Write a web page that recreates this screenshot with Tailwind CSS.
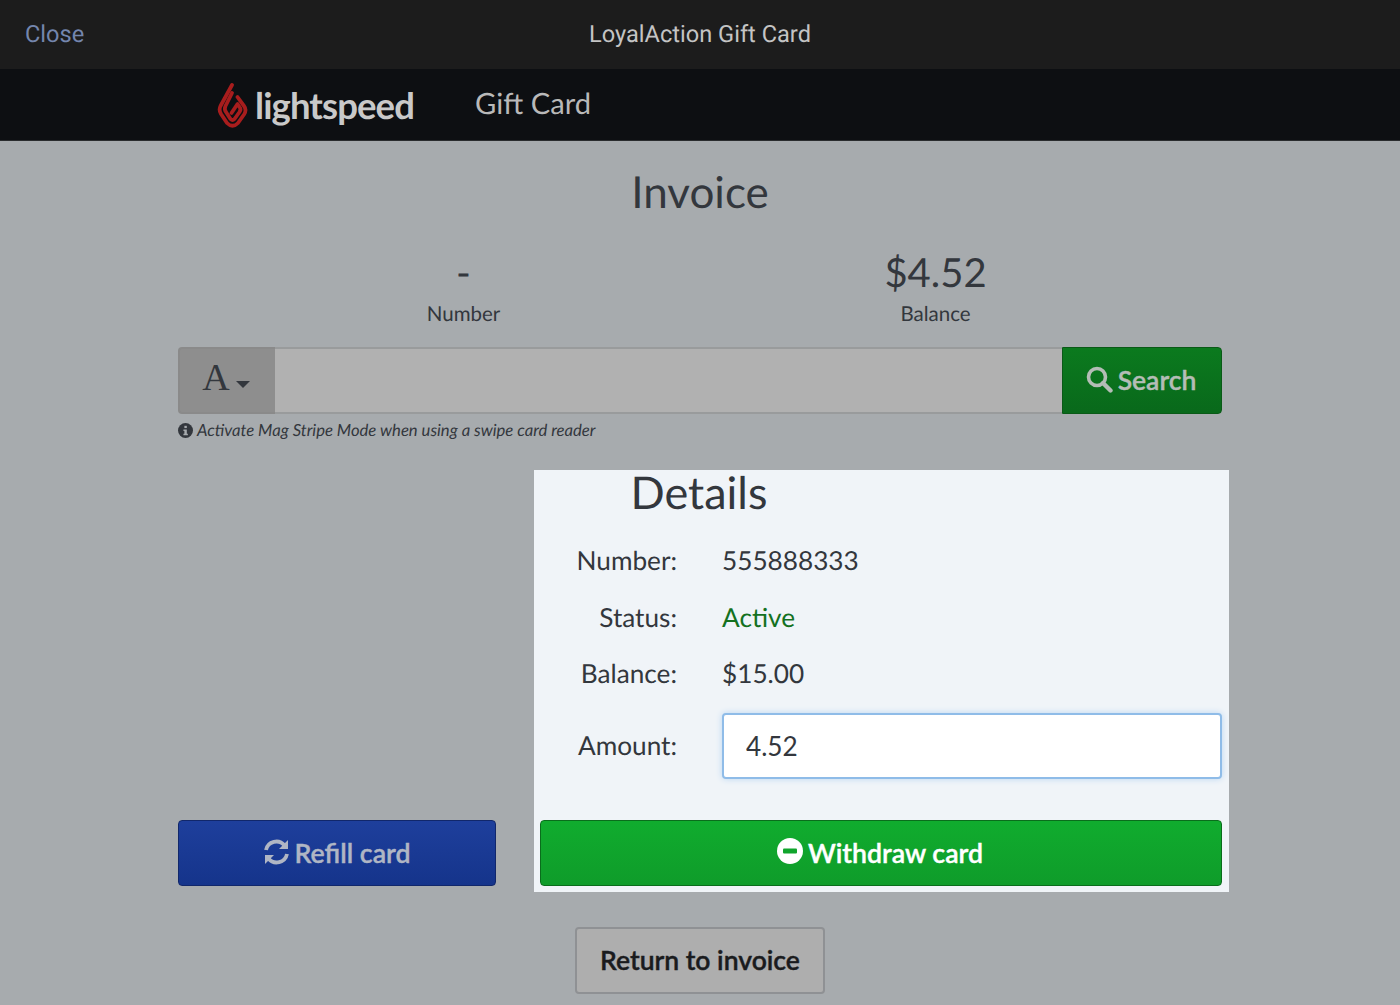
<!DOCTYPE html>
<html><head><meta charset="utf-8"><script src="https://cdn.jsdelivr.net/npm/@tailwindcss/browser@4"></script></head>
<body class="m-0 h-[1005px] w-[1400px] overflow-hidden bg-[#a7abae] font-['Lato',sans-serif] text-[#33373d] [text-rendering:geometricPrecision]">
<header class="relative flex h-[69px] items-center justify-center bg-[#1c1c1c] font-['Roboto',sans-serif] text-[23.600px] text-[#c4c4c4]">
  <span class="absolute left-[25px] text-[#7486ad]">Close</span>
  <span>LoyalAction Gift Card</span>
</header>
<nav class="flex h-[72px] items-center border-b border-[#2a2c2e] bg-[#0d0f12] pl-[217px]">
  <svg class="mt-[3px] h-[46px] w-[32px]" viewBox="0 0 32 46" fill="none" stroke="#a81d1d" stroke-width="3.800" stroke-linejoin="round" stroke-linecap="round">
    <path d="M15 2 L3.500 23 Q1.500 27 4 31 L10 40 Q15.500 45.500 21 40 L27 31.500 Q30 27 27 23 L20.500 14"/>
    <path d="M15 10 L8.500 23 Q7 26 9 29 L13.500 36 Q15.500 38 17.500 36 L22.500 29 Q24.500 26 22.500 24 L20.500 21 L14.500 30"/>
  </svg>
  <span class="ml-[6px] mt-[1px] text-[36.500px] leading-none font-bold tracking-[-0.9px] text-[#c9c9c9]">lightspeed</span>
  <span class="ml-[61px] mb-[1px] text-[29.200px] leading-[44px] text-[#b9b9b9]">Gift Card</span>
</nav>
<main class="mx-auto w-[1044px]">
  <h1 class="mt-[21px] text-center text-[44px] leading-[60px]">Invoice</h1>
  <div class="mt-[25px] grid grid-cols-2 pl-[49.500px] pr-[50.500px] text-center">
    <div><div class="text-[40px] leading-[50px]">-</div><div class="mt-[3px] text-[20.500px] leading-[28px]">Number</div></div>
    <div><div class="text-[40px] leading-[50px]">$4.52</div><div class="mt-[3px] text-[20.500px] leading-[28px]">Balance</div></div>
  </div>
  <div class="mt-[19px] flex h-[67px] rounded-[4px]">
    <div class="flex w-[97px] items-center justify-center gap-[6px] rounded-l-[4px] border-2 border-r-0 border-[#8a8a8a] bg-[#8e8e8e]">
      <span class="-mt-[5px] font-['Liberation_Serif',serif] text-[38px] leading-none">A</span>
      <span class="mt-[7px] mr-[3px] h-0 w-0 border-x-[7px] border-t-[7px] border-x-transparent border-t-[#33373d]"></span>
    </div>
    <input class="min-w-0 flex-1 border-y-2 border-[#999b9c] bg-[#b1b1b1]" aria-label="Search">
    <button class="flex w-[160px] items-center justify-center gap-[5px] rounded-r-[4px] border border-[#0a5a17] bg-gradient-to-b from-[#0b7a1e] to-[#09691b] pr-[2px] text-[26.500px] font-semibold text-[#b4bdb6] [-webkit-text-stroke:0.4px_currentColor]">
      <svg class="-mt-[3px] h-[27px] w-[27px]" viewBox="0 0 27 27" fill="none" stroke="#b4bdb6"><circle cx="11" cy="11" r="8.500" stroke-width="3.600"/><path d="M17 17l7.500 7.500" stroke-width="4.400" stroke-linecap="round"/></svg>
      <span>Search</span>
    </button>
  </div>
  <p class="mt-[6px] flex h-[21px] items-center gap-[4px] text-[16.650px] italic">
    <svg class="h-[15px] w-[15px]" viewBox="0 0 16 16"><circle cx="8" cy="8" r="8" fill="#33373d"/><rect x="6.800" y="3" width="2.600" height="2.400" fill="#a7abae"/><path d="M5.800 7h3.600v4.500h1.100v1.500H5.800v-1.500h1V8.500h-1z" fill="#a7abae"/></svg>
    Activate Mag Stripe Mode when using a swipe card reader
  </p>
  <section class="relative mt-[29px] h-[422px]">
    <div class="absolute top-0 left-[356px] h-[422px] w-[695px] bg-[#f0f4f8]"></div>
    <div class="relative flex h-full flex-col">
      <h2 class="-mt-[8px] pr-[2px] text-center text-[45px] leading-[60px]">Details</h2>
      <dl class="ml-[362px] mt-[10px] text-[26.200px]">
        <div class="flex h-[57px] items-center"><dt class="w-[137px] text-right">Number:</dt><dd class="ml-[45px]">555888333</dd></div>
        <div class="flex h-[57px] items-center"><dt class="w-[137px] text-right">Status:</dt><dd class="ml-[45px] text-[#14711f]">Active</dd></div>
        <div class="flex h-[56px] items-center"><dt class="w-[137px] text-right">Balance:</dt><dd class="ml-[45px]">$15.00</dd></div>
        <div class="mt-[11px] flex h-[66px] items-center"><dt class="w-[137px] text-right">Amount:</dt><dd class="ml-[45px] flex-1"><input value="4.52" aria-label="Amount" class="h-[66px] w-full rounded-[4px] border-2 border-[#8fbce8] bg-white px-[22px] text-[#33373d] shadow-[0_0_6px_#b8d6f2]"></dd></div>
      </dl>
      <div class="mt-[41px] flex gap-[44px]">
        <button class="flex h-[66px] w-[318px] items-center justify-center gap-[4px] rounded-[4px] border border-[#11276b] bg-gradient-to-b from-[#1e3f9c] to-[#15348b] text-[26.700px] font-semibold text-[#b0b6c4] [-webkit-text-stroke:0.4px_currentColor]">
          <svg class="-mt-[3px] h-[28px] w-[27px]" viewBox="0 0 27 28" fill="none" stroke="#b0b6c4" stroke-width="3.800"><path d="M3 12A10.500 10.500 0 0 1 21.500 7.500"/><path d="M24 16A10.500 10.500 0 0 1 5.500 20.500"/><path d="M25 2v9h-9z" fill="#b0b6c4" stroke="none"/><path d="M2 26v-9h9z" fill="#b0b6c4" stroke="none"/></svg>
          Refill card
        </button>
        <button class="flex h-[66px] flex-1 items-center justify-center gap-[5px] rounded-[4px] border border-[#0a6d1c] bg-gradient-to-b from-[#10ac2e] to-[#0f9c2a] pr-[2px] text-[26.700px] font-semibold text-white [-webkit-text-stroke:0.4px_currentColor]">
          <svg class="-mt-[5px] h-[26px] w-[26px]" viewBox="0 0 26 26"><circle cx="13" cy="13" r="13" fill="#fff"/><rect x="6" y="10.500" width="14" height="5" rx="1" fill="#10a52c"/></svg>
          Withdraw card
        </button>
      </div>
    </div>
  </section>
  <div class="mt-[35px] flex justify-center">
    <button class="h-[67px] w-[250px] rounded-[4px] border-2 border-[#8f9194] bg-[#aeaeae] text-[26.500px] font-semibold text-[#1a1b1d] [-webkit-text-stroke:0.4px_currentColor]">Return to invoice</button>
  </div>
</main>
</body></html>
